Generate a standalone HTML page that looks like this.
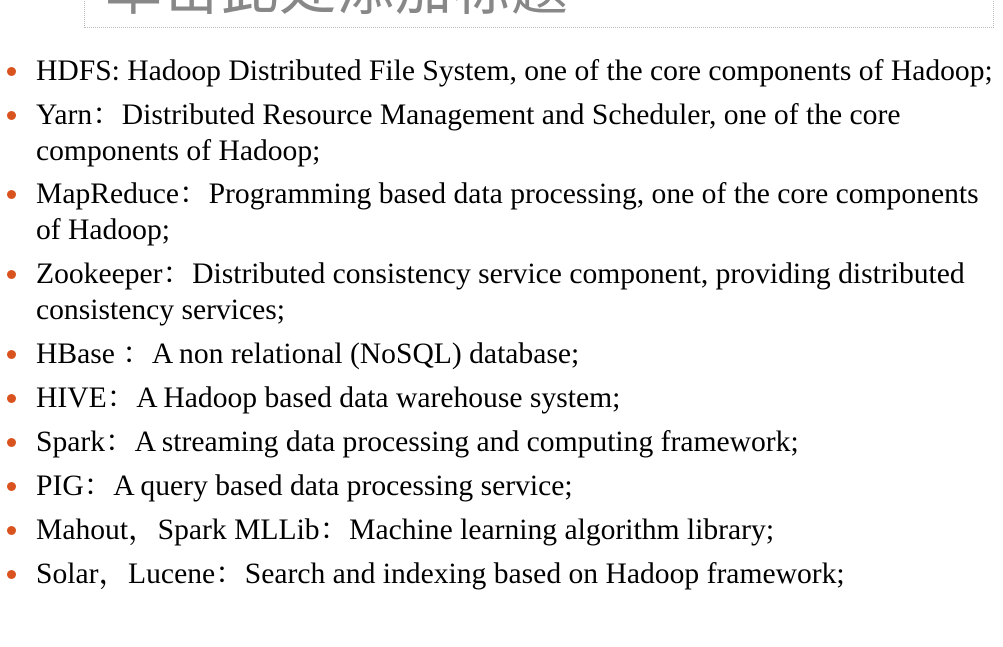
<!DOCTYPE html>
<html><head><meta charset="utf-8"><style>
body{margin:0;width:1003px;height:647px;background:#fff;overflow:hidden;position:relative;font-family:"Liberation Serif","Noto Serif CJK SC",serif;color:#000}
.box{position:absolute;left:84px;top:-40px;width:908px;height:66px;border:1px dotted #bbb}
.title{position:absolute;left:105px;top:-56px;font-family:"Liberation Sans","Noto Sans CJK SC",sans-serif;font-size:57px;color:#888;white-space:nowrap;letter-spacing:1px}
.l{position:absolute;left:36px;font-size:29.6px;white-space:nowrap;line-height:1}
.d{position:absolute;left:7px;width:9px;height:9px;border-radius:50%;background:#d9531e}
</style></head><body>
<div class="box"></div>
<div class="title">单击此处添加标题</div>
<div class="d" style="top:67px"></div><div class="l" style="top:57px">HDFS: Hadoop Distributed File System, one of the core components of Hadoop;</div>
<div class="d" style="top:111px"></div><div class="l" style="top:101px">Yarn：Distributed Resource Management and Scheduler, one of the core</div>
<div class="l" style="top:137px">components of Hadoop;</div>
<div class="d" style="top:190px"></div><div class="l" style="top:180px">MapReduce：Programming based data processing, one of the core components</div>
<div class="l" style="top:216px">of Hadoop;</div>
<div class="d" style="top:270px"></div><div class="l" style="top:260px">Zookeeper：Distributed consistency service component, providing distributed</div>
<div class="l" style="top:296px">consistency services;</div>
<div class="d" style="top:350px"></div><div class="l" style="top:340px">HBase ：A non relational (NoSQL) database;</div>
<div class="d" style="top:394px"></div><div class="l" style="top:384px">HIVE：A Hadoop based data warehouse system;</div>
<div class="d" style="top:438px"></div><div class="l" style="top:428px">Spark：A streaming data processing and computing framework;</div>
<div class="d" style="top:482px"></div><div class="l" style="top:472px">PIG：A query based data processing service;</div>
<div class="d" style="top:526px"></div><div class="l" style="top:516px">Mahout，Spark MLLib：Machine learning algorithm library;</div>
<div class="d" style="top:570px"></div><div class="l" style="top:560px">Solar，Lucene：Search and indexing based on Hadoop framework;</div>
</body></html>
